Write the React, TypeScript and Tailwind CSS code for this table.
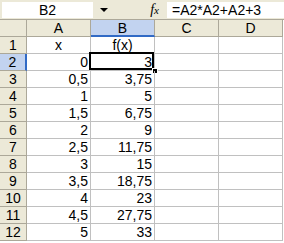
import React from 'react'

const cols = ['A', 'B', 'C', 'D']

const rows: [string, string][] = [
  ['x', 'f(x)'],
  ['0', '3'],
  ['0,5', '3,75'],
  ['1', '5'],
  ['1,5', '6,75'],
  ['2', '9'],
  ['2,5', '11,75'],
  ['3', '15'],
  ['3,5', '18,75'],
  ['4', '23'],
  ['4,5', '27,75'],
  ['5', '33'],
]

export default function App() {
  return (
    <div
      className="w-[284px] h-[243px] overflow-hidden bg-white text-[14px] leading-none text-black"
      style={{ fontFamily: '"Liberation Sans", Arial, sans-serif' }}
    >
      {/* formula bar */}
      <div className="flex items-center h-[20px] bg-[#ece9d8] border-b border-[#aca899]">
        <div className="ml-[2px] w-[91px] h-[16px] bg-white flex items-center justify-center">B2</div>
        <div className="w-[22px] flex justify-center">
          <span className="block w-0 h-0 border-l-[4px] border-r-[4px] border-t-[4px] border-l-transparent border-r-transparent border-t-black" />
        </div>
        <div className="w-[52px] flex justify-end pr-[8px]">
          <span className="italic text-[14px]" style={{ fontFamily: '"Liberation Serif", serif' }}>
            f<span className="text-[11px]">x</span>
          </span>
        </div>
        <div className="flex-1 h-[16px] bg-white flex items-center pl-[5px]">=A2*A2+A2+3</div>
      </div>

      {/* column headers */}
      <div className="flex h-[17px]">
        <div className="w-[27px] bg-[#ece9d8] border-r border-b border-[#aca899]" />
        {cols.map((c) => (
          <div
            key={c}
            className={
              c === 'B'
                ? 'w-[64px] flex items-center justify-center bg-[#c2d3f0] border-r border-[#aca899] border-b-2 border-b-[#316ac5]'
                : 'w-[64px] flex items-center justify-center bg-[#ece9d8] border-r border-b border-[#aca899]'
            }
          >
            {c}
          </div>
        ))}
      </div>

      {/* grid rows */}
      {rows.map(([a, b], i) => {
        const n = i + 1
        const head = i === 0
        return (
          <div key={n} className="flex h-[17px]">
            <div
              className={
                n === 2
                  ? 'w-[27px] flex items-center justify-center bg-[#c2d3f0] border-r-2 border-r-[#316ac5] border-b border-[#aca899]'
                  : 'w-[27px] flex items-center justify-center bg-[#ece9d8] border-r border-b border-[#aca899]'
              }
            >
              {n}
            </div>
            <div
              className={
                head
                  ? 'w-[64px] flex items-center justify-center border-r border-b border-[#c0c0c0]'
                  : 'w-[64px] flex items-center justify-end pr-[2px] border-r border-b border-[#c0c0c0]'
              }
            >
              {a}
            </div>
            <div
              className={
                head
                  ? 'relative w-[64px] flex items-center justify-center border-r border-b border-[#c0c0c0]'
                  : 'relative w-[64px] flex items-center justify-end pr-[2px] border-r border-b border-[#c0c0c0]'
              }
            >
              {b}
              {n === 2 && (
                <>
                  <div className="absolute left-[-2px] top-[-2px] w-[65px] h-[18px] border-2 border-black pointer-events-none" />
                  <div className="absolute right-[-4px] bottom-[-4px] w-[6px] h-[6px] bg-black border border-white" />
                </>
              )}
            </div>
            <div className="w-[64px] border-r border-b border-[#c0c0c0]" />
            <div className="w-[64px] border-r border-b border-[#c0c0c0]" />
          </div>
        )
      })}
    </div>
  )
}
